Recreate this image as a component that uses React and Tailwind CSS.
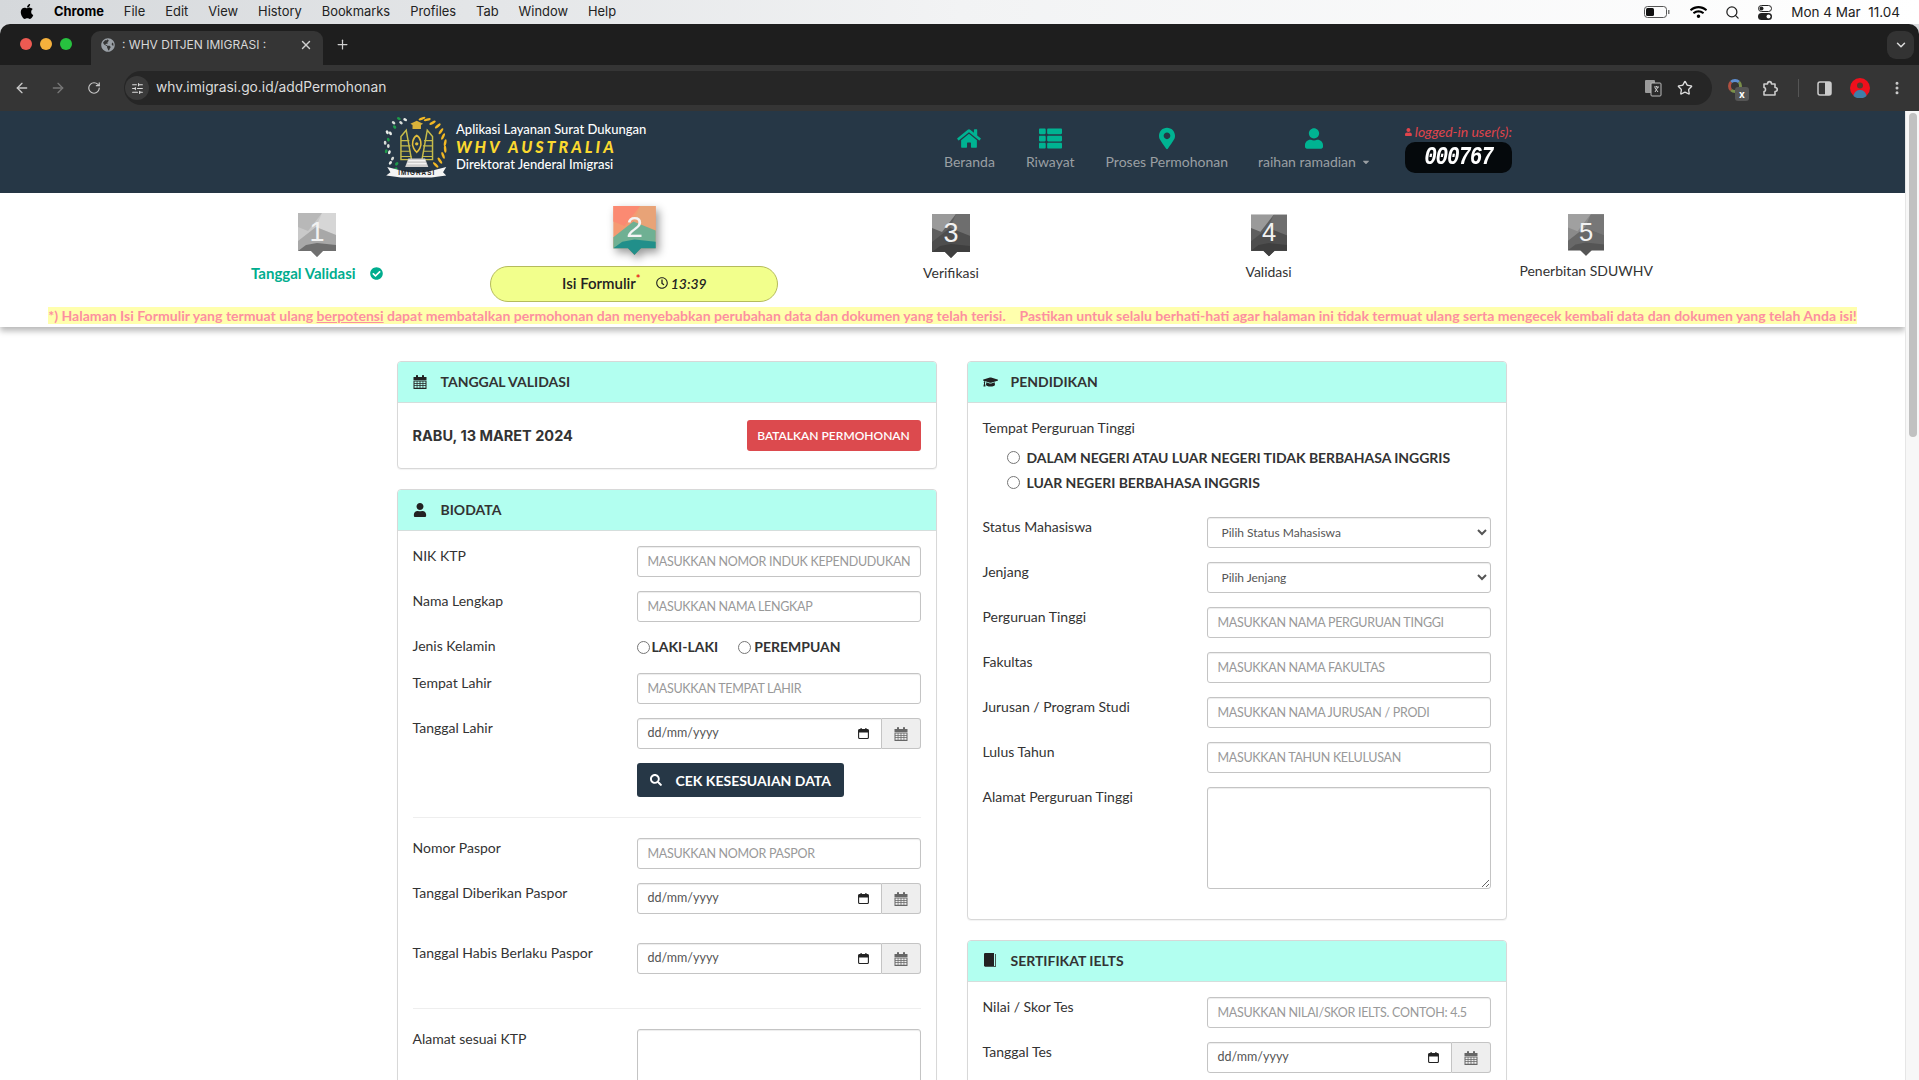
import { ArrowLeft, ArrowRight, RotateCw, Star, EllipsisVertical, ChevronDown, Plus, X, SlidersHorizontal, Search } from "lucide-react";
import { FaApple, FaWifi, FaHome, FaThList, FaMapMarkerAlt, FaUser, FaCheckCircle, FaGraduationCap, FaSearch, FaRegClock, FaGlobeAmericas, FaCaretDown } from "react-icons/fa";

const menuItems = ["File", "Edit", "View", "History", "Bookmarks", "Profiles", "Tab", "Window", "Help"];

const MenuBar = () => (
  <div className="h-[24px] flex items-center justify-between bg-gradient-to-r from-[#d5d8db] via-[#f2f3f4] to-white pl-[19px] pr-[19px] text-[12.9px] text-black [font-family:Inter,sans-serif]">
    <div className="flex items-center">
      <FaApple className="w-[16px] h-[17px] mr-[19px]" />
      <span className="font-bold mr-[20px]">Chrome</span>
      <div className="flex gap-[20px] text-[#222]">
        {menuItems.map((m) => (
          <span key={m}>{m}</span>
        ))}
      </div>
    </div>
    <div className="flex items-center">
      <svg width="26" height="12" viewBox="0 0 26 12" className="mr-[20px]">
        <rect x="0.5" y="0.5" width="22" height="11" rx="3" fill="none" stroke="#555" />
        <rect x="2" y="2" width="8" height="8" rx="1.5" fill="#111" />
        <rect x="24" y="4" width="1.5" height="4" fill="#777" />
      </svg>
      <FaWifi className="w-[17px] h-[14px] mr-[18px]" />
      <Search className="w-[15px] h-[15px] mr-[18px] text-[#222]" strokeWidth={2} />
      <svg width="14" height="15" viewBox="0 0 14 15" className="mr-[19px]">
        <rect x="0.5" y="0.5" width="13" height="6" rx="3" fill="none" stroke="#222" />
        <circle cx="3.5" cy="3.5" r="2" fill="#222" />
        <rect x="0" y="8" width="14" height="7" rx="3.5" fill="#222" />
        <circle cx="10.5" cy="11.5" r="2" fill="#fff" />
      </svg>
      <span className="text-[#222] text-[13.5px] whitespace-pre">Mon 4 Mar  11.04</span>
    </div>
  </div>
);

const TabStrip = () => (
  <div className="h-[41px] flex items-end relative bg-[#1e1e1e] rounded-t-[10px]">
    <div className="flex gap-[8px] items-center absolute left-[20px] top-[14px]">
      <span className="w-[12px] h-[12px] rounded-full bg-[#ed5a52]" />
      <span className="w-[12px] h-[12px] rounded-full bg-[#f5b13c]" />
      <span className="w-[12px] h-[12px] rounded-full bg-[#27c23f]" />
    </div>
    <div className="ml-[91px] w-[232px] h-[34px] bg-[#353535] rounded-t-[9px] flex items-center pl-[10px] pr-[10px] pb-[6px] text-[12px] text-[#d8d8d8]">
      <FaGlobeAmericas className="w-[14px] h-[14px] text-[#9aa0a6] mr-[7px]" />
      <span className="flex-1">: WHV DITJEN IMIGRASI :</span>
      <X className="w-[14px] h-[14px] text-[#d0d0d0]" strokeWidth={2.5} />
    </div>
    <Plus className="w-[15px] h-[15px] text-[#d0d0d0] ml-[12px] mb-[13px]" strokeWidth={2} />
    <div className="absolute right-[5px] top-[7px] w-[27px] h-[28px] rounded-[9px] bg-[#333] flex items-center justify-center">
      <ChevronDown className="w-[14px] h-[14px] text-[#ddd]" strokeWidth={2.5} />
    </div>
  </div>
);

const Toolbar = () => (
  <div className="h-[46px] bg-[#353535] flex items-center text-[#c8c8c8]">
    <ArrowLeft className="w-[16px] h-[16px] ml-[14px]" strokeWidth={2} />
    <ArrowRight className="w-[16px] h-[16px] ml-[20px] text-[#777]" strokeWidth={2} />
    <RotateCw className="w-[14px] h-[14px] ml-[21px]" strokeWidth={2} />
    <div className="w-[1588px] h-[34px] ml-[23px] rounded-full bg-[#262626] flex items-center">
      <div className="w-[24px] h-[24px] ml-[1px] rounded-full bg-[#3a3a3a] flex items-center justify-center">
        <SlidersHorizontal className="w-[13px] h-[13px] text-[#ddd]" />
      </div>
      <span className="ml-[7px] pb-[1px] text-[13.8px] text-[#dcdcdc] flex-1">whv.imigrasi.go.id/addPermohonan</span>
      <svg width="18" height="18" viewBox="0 0 18 18" className="mr-[15px]">
        <rect x="1" y="1" width="10" height="13" rx="1" fill="#9a9a9a" />
        <rect x="7" y="4" width="10" height="13" rx="1" fill="#2b2b2b" stroke="#bbb" />
        <path d="M10 8h5M12.5 7v1M11 13l3-5M11 9l3 4" stroke="#ccc" strokeWidth="1" fill="none" />
      </svg>
      <Star className="w-[16px] h-[16px] text-[#ddd] mr-[19px]" strokeWidth={2} />
    </div>
    <div className="relative ml-[16px] w-[18px] h-[18px]">
      <div className="w-[14px] h-[14px] rounded-full border-[3px] border-[#7a8f4a] border-t-[#5f8fd0] border-l-[#b05040]" />
      <div className="absolute left-[7px] top-[8px] w-[14px] h-[14px] rounded-[3px] bg-[#555] text-white text-[10px] font-bold flex items-center justify-center leading-none">x</div>
    </div>
    <svg width="17" height="17" viewBox="0 0 17 17" className="ml-[16px]" fill="none" stroke="#ccc" strokeWidth="1.6" strokeLinejoin="round">
      <path d="M2 4h3.5c0-3.2 4-3.2 4 0H13v3.5c3 0 3 4 0 4V15H2v-3.5c2 0 2-4 0-4z" />
    </svg>
    <div className="w-px h-[18px] bg-[#555] ml-[19px]" />
    <svg width="15" height="15" viewBox="0 0 15 15" className="ml-[18px]">
      <rect x="1" y="1" width="13" height="13" rx="2" fill="none" stroke="#ccc" strokeWidth="1.5" />
      <rect x="8" y="1" width="6" height="13" fill="#ccc" />
    </svg>
    <svg width="20" height="20" viewBox="0 0 20 20" className="ml-[18px]">
      <circle cx="10" cy="10" r="10" fill="#f0101c" />
      <circle cx="10" cy="7.5" r="3" fill="#5a3a30" />
      <path d="M3.5 18c1-5 4-6 6.5-6s5.5 1 6.5 6a10 10 0 0 1-13 0z" fill="#3f7fa8" />
    </svg>
    <EllipsisVertical className="w-[16px] h-[16px] ml-[19px] text-[#ccc]" strokeWidth={2.5} />
  </div>
);

const leftLeaves = [
  [18, 11, 40], [12, 15, 50], [8, 21, 60], [6, 27, 75], [6, 33, 90], [7, 39, 105], [10, 45, 120], [14, 50, 135], [22, 8, 30], [16, 7, 30], [11, 11, 40], [5, 20, 60], [3, 30, 85], [4, 38, 100], [8, 49, 125], [13, 55, 140],
];
const rightLeaves = [
  [38, 7, -20], [43, 8, -15], [48, 11, -30], [53, 14, -40], [56, 19, -55], [58, 24, -65], [60, 30, -80], [60, 36, -95], [58, 42, -110], [55, 47, -125], [51, 51, -135],
];

const Emblem = () => (
  <svg width="80" height="72" viewBox="0 0 76 68" className="shrink-0">
    {leftLeaves.map(([x, y, r], i) => (
      <ellipse key={i} cx={x} cy={y} rx="1.9" ry="1.3" transform={`rotate(${r} ${x} ${y})`} fill={i % 3 === 2 ? "#e8ece8" : i % 2 ? "#1f9a4a" : "#d8dcd8"} />
    ))}
    {rightLeaves.map(([x, y, r], i) => (
      <ellipse key={i} cx={x} cy={y} rx="3.4" ry="1.2" transform={`rotate(${r} ${x} ${y})`} fill="#f2b824" />
    ))}
    <path d="M27 12l6-3 6 3-2 1v4h-8v-4z" fill="#d9b23a" />
    <path d="M18 46V24l5-6 5 28zM48 46V24l-5-6-5 28z" fill="none" stroke="#c6bb4a" strokeWidth="1.4" />
    <path d="M18 28h8M18 33h9M18 38h9M18 43h10M48 28h-8M48 33h-9M48 38h-9M48 43h-10" stroke="#c6bb4a" strokeWidth="1.1" />
    <path d="M33 23c-4 2-5 9-3 12 1 2 2 3 3 4 1-1 2-2 3-4 2-3 1-10-3-12z" fill="none" stroke="#e0bd3c" strokeWidth="1.5" />
    <circle cx="33" cy="31" r="1.6" fill="#e0bd3c" />
    <path d="M22 53l3-8h16l3 8z" fill="#cfcfcf" />
    <path d="M25 47h16M24 50h18" stroke="#fff" strokeWidth="1" />
    <path d="M5 53l12 3c10 3 22 3 32 0l12-3-3 5 3 3-14 2H18L4 61l4-3z" fill="#f4f4f4" />
    <text x="33" y="60.5" textAnchor="middle" fontSize="6" fontWeight="700" fill="#222" letterSpacing="1" fontFamily="Liberation Sans">IMIGRASI</text>
  </svg>
);

const navItems = [
  { label: "Beranda", icon: <FaHome className="w-[24px] h-[21px]" /> },
  { label: "Riwayat", icon: <FaThList className="w-[27px] h-[23px]" /> },
  { label: "Proses Permohonan", icon: <FaMapMarkerAlt className="w-[16px] h-[23px]" /> },
];

const SiteHeader = () => (
  <header className="h-[82px] bg-[#263746] flex items-start pl-[383px] shrink-0">
    <div className="-ml-[1px]">
      <Emblem />
    </div>
    <div className="-ml-[6px] mt-[9px] w-[488px] text-white">
      <div className="text-[13px] leading-[18px] font-medium">Aplikasi Layanan Surat Dukungan</div>
      <div className="text-[16px] leading-[18px] font-black italic tracking-[3px] text-[#fbd92f]">WHV AUSTRALIA</div>
      <div className="-mt-[1px] text-[13px] leading-[18px] font-medium">Direktorat Jenderal Imigrasi</div>
    </div>
    <div className="flex gap-[31px] text-[14px] text-[#9a9fa3] mt-[15px]">
      {navItems.map((n) => (
        <div key={n.label} className="flex flex-col items-center">
          <div className="h-[25px] flex items-center text-[#00b392]">{n.icon}</div>
          <div className="mt-[1px] leading-[20px]">{n.label}</div>
        </div>
      ))}
      <div className="-ml-[1px] flex flex-col items-center">
        <div className="h-[25px] flex items-center text-[#00b392]">
          <FaUser className="w-[18px] h-[23px]" />
        </div>
        <div className="mt-[1px] leading-[20px] flex items-center gap-[5px]">
          raihan ramadian
          <FaCaretDown className="w-[10px] h-[10px]" />
        </div>
      </div>
    </div>
    <div className="ml-[34px] mt-[13px] w-[107px]">
      <div className="flex items-center gap-[3px] text-[14px] leading-[16px] italic text-[#e0444b] whitespace-nowrap">
        <FaUser className="w-[8px] h-[10px]" />
        logged-in user(s):
      </div>
      <div className="h-[31px] mt-[2px] rounded-[10px] bg-[#05090c] flex items-center justify-center text-white text-[21px] font-bold italic [font-family:'Liberation_Mono',monospace] tracking-[-1.2px]">
        <span className="inline-block scale-y-125">000767</span>
      </div>
    </div>
  </header>
);

const StepIcon = ({ n, tone, w = 38, h = 44 }) => {
  const palettes = {
    light: ["#c9c9c9", "#b8b8b8", "#d6d6d6", "#a8a8a8", "#6f6f6f"],
    dark: ["#5f5f5f", "#9a9a9a", "#6e6e6e", "#4e4e4e", "#3f3f3f"],
    mid: ["#8a8a8a", "#a0a0a0", "#777", "#686868", "#555"],
    color: ["#f49a72", "#fb8a72", "#e8a377", "#6fb093", "#218f8a"],
  };
  const [a, b, c, d, e] = palettes[tone];
  return (
    <svg width={w} height={h} viewBox="0 0 38 44" className={tone === "color" ? "drop-shadow-[3px_4px_4px_rgba(0,0,0,0.4)]" : ""}>
      <path d="M0 0h38v38H25l-6 6-6-6H0z" fill={a} />
      <path d="M0 0h24L10 18 0 14z" fill={b} />
      <path d="M24 0h14v22L18 14z" fill={c} />
      <path d="M0 28l18-14 20 8v16H0z" fill={d} />
      <path d="M0 38l8-6 11-2 19 2v6H25l-6 6-6-6z" fill={e} />
      <text x="19" y="28" textAnchor="middle" fontSize="27" fill={tone === "color" ? "#f4f4f4" : "#f2f2f2"} fontFamily="Liberation Sans">
        {n}
      </text>
    </svg>
  );
};

const Steps = () => (
  <section className="shrink-0 h-[134px] bg-white shadow-[0_4px_6px_rgba(0,0,0,0.28)] relative">
    <div className="grid grid-cols-5 w-[1588px] h-[113px] ml-[157px] text-[14px] text-[#333]">
      <div className="flex flex-col items-center pt-[20px] pl-[2px]">
        <StepIcon n="1" tone="light" />
        <div className="mt-[6px] flex items-center text-[15px] font-bold text-[#00ad8e] leading-[20px]">
          Tanggal Validasi
          <FaCheckCircle className="w-[13px] h-[13px] ml-[14px]" />
        </div>
      </div>
      <div className="flex flex-col items-center pt-[13px] pl-[2px]">
        <StepIcon n="2" tone="color" w={43} h={49} />
        <div className="mt-[11px] w-[288px] h-[36px] pb-[2px] rounded-full bg-[#f2ff8c] border border-[#b5bb5c] flex items-center justify-center font-semibold text-[#222]">
          <span className="text-[15px]">Isi Formulir<sup className="text-red-600">*</sup></span>
          <span className="ml-[15px] flex items-center gap-[3px] italic">
            <FaRegClock className="w-[12px] h-[12px]" />
            13:39
          </span>
        </div>
      </div>
      <div className="flex flex-col items-center pt-[21px]">
        <StepIcon n="3" tone="dark" />
        <div className="mt-[5px] leading-[20px]">Verifikasi</div>
      </div>
      <div className="flex flex-col items-center pt-[21px]">
        <StepIcon n="4" tone="dark" w={36} h={43} />
        <div className="mt-[5px] leading-[20px]">Validasi</div>
      </div>
      <div className="flex flex-col items-center pt-[21px]">
        <StepIcon n="5" tone="mid" w={36} h={42} />
        <div className="mt-[5px] leading-[20px]">Penerbitan SDUWHV</div>
      </div>
    </div>
    <div className="text-center leading-[19px] text-[14.07px] font-bold whitespace-pre">
      <span className="bg-[#ffffad] text-[#fd8fa0]">
        *) Halaman Isi Formulir yang termuat ulang <u>berpotensi</u> dapat membatalkan permohonan dan menyebabkan perubahan data dan dokumen yang telah terisi.{"    "}Pastikan untuk selalu berhati-hati agar halaman ini tidak termuat ulang serta mengecek kembali data dan dokumen yang telah Anda isi!
      </span>
    </div>
  </section>
);

const CalendarGlyph = ({ color = "#555", size = 14 }) => (
  <svg width={size} height={size} viewBox="0 0 14 14" fill={color}>
    <rect x="3" y="0" width="2" height="3" rx="0.8" />
    <rect x="9" y="0" width="2" height="3" rx="0.8" />
    <path d="M0.5 2h13v3h-13z" />
    <path d="M0.5 5.5h13V14h-13zM1.5 6.5v1.5h2.2V6.5zM4.4 6.5v1.5h2.2V6.5zM7.4 6.5v1.5h2.2V6.5zM10.3 6.5v1.5h2.2V6.5zM1.5 8.8v1.5h2.2V8.8zM4.4 8.8v1.5h2.2V8.8zM7.4 8.8v1.5h2.2V8.8zM10.3 8.8v1.5h2.2V8.8zM1.5 11v1.8h2.2V11zM4.4 11v1.8h2.2V11zM7.4 11v1.8h2.2V11zM10.3 11v1.8h2.2V11z" fillRule="evenodd" />
  </svg>
);

const BookGlyph = () => (
  <svg width="14" height="15" viewBox="0 0 14 15" fill="#222">
    <path d="M2 0h9v13H2.5C1.7 13 1 13.5 1 14v-12.5C1 .7 1.4 0 2 0z" />
    <path d="M2 13h10V1h1v13H2z" fillOpacity="0.75" />
  </svg>
);

const Card = ({ icon, title, children }) => (
  <div className="mb-[20px] bg-white border border-[#d8d8d8] rounded-[4px] shadow-[0_1px_1px_rgba(0,0,0,0.05)] overflow-hidden">
    <div className="h-[41px] pb-[1px] bg-[#b2fff0] border-b border-[#d5dedc] flex items-center pl-[15px] text-[14px] font-bold text-[#333]">
      <span className="w-[28px] flex items-center">{icon}</span>
      {title}
    </div>
    {children}
  </div>
);

const Row = ({ label, children, className = "mb-[14px]" }) => (
  <div className={`flex ${className}`}>
    <label className="w-[224px] shrink-0 text-[14px] leading-[20px] text-[#333]">{label}</label>
    <div className="w-[284px]">{children}</div>
  </div>
);

const inputCls = "block w-full h-[31px] px-[10px] text-[12.5px] tracking-[-0.3px] border border-[#c4c4c4] rounded-[3px] bg-white shadow-[inset_0_1px_1px_rgba(0,0,0,0.075)] placeholder:text-[#999]";

const TextRow = ({ label, placeholder }) => (
  <Row label={label}>
    <input className={inputCls} placeholder={placeholder} />
  </Row>
);

const DateRow = ({ label, className }) => (
  <Row label={label} className={className}>
    <div className="flex h-[31px]">
      <div className="flex-1 flex items-center justify-between pl-[10px] pr-[12px] text-[12.5px] text-[#555] border border-[#c4c4c4] rounded-l-[3px] shadow-[inset_0_1px_1px_rgba(0,0,0,0.075)]">
        dd/mm/yyyy
        <svg width="11" height="11" viewBox="0 0 11 11">
          <rect x="0.6" y="1.5" width="9.8" height="9" rx="1" fill="none" stroke="#222" strokeWidth="1.1" />
          <rect x="0.6" y="1.5" width="9.8" height="3" fill="#222" />
          <rect x="2.5" y="0" width="1.2" height="2" fill="#222" />
          <rect x="7.3" y="0" width="1.2" height="2" fill="#222" />
        </svg>
      </div>
      <div className="w-[39px] bg-[#eee] border border-l-0 border-[#c4c4c4] rounded-r-[3px] flex items-center justify-center">
        <CalendarGlyph color="#666" />
      </div>
    </div>
  </Row>
);

const SelectRow = ({ label, value }) => (
  <Row label={label}>
    <select className="block w-full h-[31px] pl-[10px] pr-[4px] text-[12px] text-[#555] border border-[#c4c4c4] rounded-[3px] bg-white shadow-[inset_0_1px_1px_rgba(0,0,0,0.075)]" defaultValue={value}>
      <option>{value}</option>
    </select>
  </Row>
);

const Divider = ({ className }) => <div className={`h-px bg-[#eee] ${className}`} />;

const LeftColumn = () => (
  <div className="w-[540px]">
    <Card icon={<CalendarGlyph color="#222" />} title="TANGGAL VALIDASI">
      <div className="h-[65px] px-[15px] flex items-center justify-between">
        <span className="text-[14.5px] font-bold text-[#333] [font-family:Inter,sans-serif]">RABU, 13 MARET 2024</span>
        <button className="w-[174px] h-[31px] rounded-[3px] bg-[#dc4a4e] text-white text-[12px] font-semibold">BATALKAN PERMOHONAN</button>
      </div>
    </Card>
    <Card icon={<FaUser className="w-[14px] h-[14px] text-[#222]" />} title="BIODATA">
      <div className="px-[15px] pt-[15px]">
        <TextRow label="NIK KTP" placeholder="MASUKKAN NOMOR INDUK KEPENDUDUKAN" />
        <TextRow label="Nama Lengkap" placeholder="MASUKKAN NAMA LENGKAP" />
        <Row label="Jenis Kelamin" className="h-[37px]">
          <div className="flex items-center pt-[1px] text-[14px] font-bold text-[#333] leading-[20px]">
            <input type="radio" name="jk" className="m-0 mr-[2px]" />
            LAKI-LAKI
            <input type="radio" name="jk" className="m-0 ml-[20px] mr-[3px]" />
            PEREMPUAN
          </div>
        </Row>
        <TextRow label="Tempat Lahir" placeholder="MASUKKAN TEMPAT LAHIR" />
        <DateRow label="Tanggal Lahir" className="mb-[14px]" />
        <div className="pl-[224px]">
          <button className="w-[207px] h-[34px] rounded-[3px] bg-[#263746] text-white text-[14px] font-bold flex items-center pl-[13px]">
            <FaSearch className="w-[12px] h-[12px] mr-[14px]" />
            CEK KESESUAIAN DATA
          </button>
        </div>
        <Divider className="mt-[20px] mb-[20px]" />
        <TextRow label="Nomor Paspor" placeholder="MASUKKAN NOMOR PASPOR" />
        <DateRow label="Tanggal Diberikan Paspor" className="mb-[29px]" />
        <DateRow label="Tanggal Habis Berlaku Paspor" className="mb-[34px]" />
        <Divider className="mb-[20px]" />
        <Row label="Alamat sesuai KTP">
          <textarea className="block w-full h-[102px] border border-[#c4c4c4] rounded-[3px] shadow-[inset_0_1px_1px_rgba(0,0,0,0.075)]" />
        </Row>
      </div>
    </Card>
  </div>
);

const RightColumn = () => (
  <div className="w-[540px]">
    <Card icon={<FaGraduationCap className="w-[15px] h-[14px] text-[#222]" />} title="PENDIDIKAN">
      <div className="px-[15px] pt-[15px] pb-[30px]">
        <div className="text-[14px] leading-[20px] text-[#333]">Tempat Perguruan Tinggi</div>
        <div className="mt-[7px] mb-[22px] pl-[24px] text-[14px] font-bold tracking-[-0.04px] text-[#333] leading-[25px]">
          <div className="flex items-center">
            <input type="radio" name="pt" className="m-0 mr-[7px]" />
            DALAM NEGERI ATAU LUAR NEGERI TIDAK BERBAHASA INGGRIS
          </div>
          <div className="flex items-center">
            <input type="radio" name="pt" className="m-0 mr-[7px]" />
            LUAR NEGERI BERBAHASA INGGRIS
          </div>
        </div>
        <SelectRow label="Status Mahasiswa" value="Pilih Status Mahasiswa" />
        <SelectRow label="Jenjang" value="Pilih Jenjang" />
        <TextRow label="Perguruan Tinggi" placeholder="MASUKKAN NAMA PERGURUAN TINGGI" />
        <TextRow label="Fakultas" placeholder="MASUKKAN NAMA FAKULTAS" />
        <TextRow label="Jurusan / Program Studi" placeholder="MASUKKAN NAMA JURUSAN / PRODI" />
        <TextRow label="Lulus Tahun" placeholder="MASUKKAN TAHUN KELULUSAN" />
        <Row label="Alamat Perguruan Tinggi" className="">
          <textarea className="block w-full h-[102px] border border-[#c4c4c4] rounded-[3px] shadow-[inset_0_1px_1px_rgba(0,0,0,0.075)]" />
        </Row>
      </div>
    </Card>
    <Card icon={<BookGlyph />} title="SERTIFIKAT IELTS">
      <div className="px-[15px] pt-[15px]">
        <TextRow label="Nilai / Skor Tes" placeholder="MASUKKAN NILAI/SKOR IELTS. CONTOH: 4.5" />
        <DateRow label="Tanggal Tes" />
      </div>
    </Card>
  </div>
);

const Scrollbar = () => (
  <div className="w-[14px] shrink-0 bg-[#f7f7f7] border-l border-[#e6e6e6] pt-[2px] pl-[3px]">
    <div className="w-[8px] h-[324px] rounded-full bg-[#c1c1c1]" />
  </div>
);

export default function App() {
  return (
    <div className="w-[1919px] h-[1080px] overflow-hidden flex flex-col bg-[#d9dbde] [font-family:Lato,sans-serif]">
      <MenuBar />
      <div className="[font-family:Inter,sans-serif]">
        <TabStrip />
        <Toolbar />
      </div>
      <div className="flex-1 min-h-0 flex bg-white">
        <div className="flex-1 min-w-0 flex flex-col overflow-hidden">
          <SiteHeader />
          <Steps />
          <main className="flex justify-center gap-[30px] pt-[34px] pr-[2px]">
            <LeftColumn />
            <RightColumn />
          </main>
        </div>
        <Scrollbar />
      </div>
    </div>
  );
}
